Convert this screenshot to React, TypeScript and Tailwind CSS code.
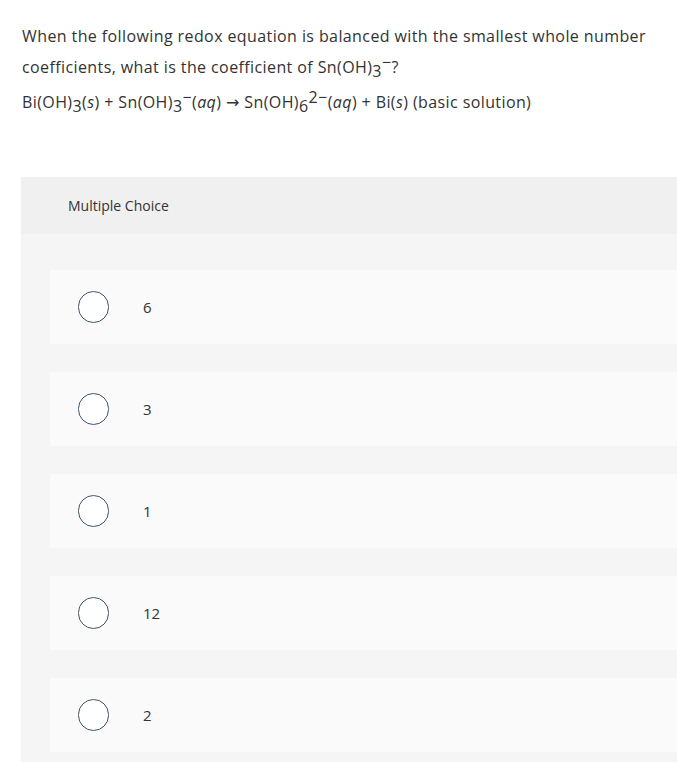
import React from 'react';

const options = ['6', '3', '1', '12', '2'];

const Sub = ({ children }: { children: React.ReactNode }) => (
  <span className="align-[-4px] leading-none">{children}</span>
);

const Sup = ({ children }: { children: React.ReactNode }) => (
  <span className="align-[5px] leading-none">{children}</span>
);

export default function App() {
  return (
    <div className="min-h-screen bg-white font-['Open_Sans','Liberation_Sans',sans-serif] text-[#333]">
      <div className="pl-[22px] pr-4 pt-[21px] text-[16px] leading-[31px] tracking-[0.4px]">
        <p>
          When the following redox equation is balanced with the smallest whole number coefficients, what is the
          coefficient of Sn(OH)<Sub>3</Sub>
          <Sup>−</Sup>?
        </p>
        <p className="mt-[4px]">
          Bi(OH)<Sub>3</Sub>(<i>s</i>) + Sn(OH)<Sub>3</Sub>
          <Sup>−</Sup>(<i>aq</i>) <span className="font-['DejaVu_Sans',sans-serif] text-[16px] leading-none">→</span>{' '}
          Sn(OH)<Sub>6</Sub>
          <Sup>2−</Sup>(<i>aq</i>) + Bi(<i>s</i>) (basic solution)
        </p>
      </div>

      <div className="ml-[21px] mt-[59px] bg-[#f5f5f5]">
        <div className="h-[57px] bg-[#f0f0f0] pl-[47px] flex items-center text-[14px] text-[#333]">Multiple Choice</div>
        <div className="pl-[29px] pt-[36px] pb-[10px] flex flex-col gap-[28px]">
          {options.map(o => (
            <div key={o} className="h-[74px] bg-[#fafafa] pl-[28px] flex items-center gap-[34px]">
              <div className="w-[31px] h-[32px] rounded-full border border-[#3f5568] bg-white" />
              <span className="text-[15px] text-[#333]">{o}</span>
            </div>
          ))}
        </div>
      </div>
    </div>
  );
}
